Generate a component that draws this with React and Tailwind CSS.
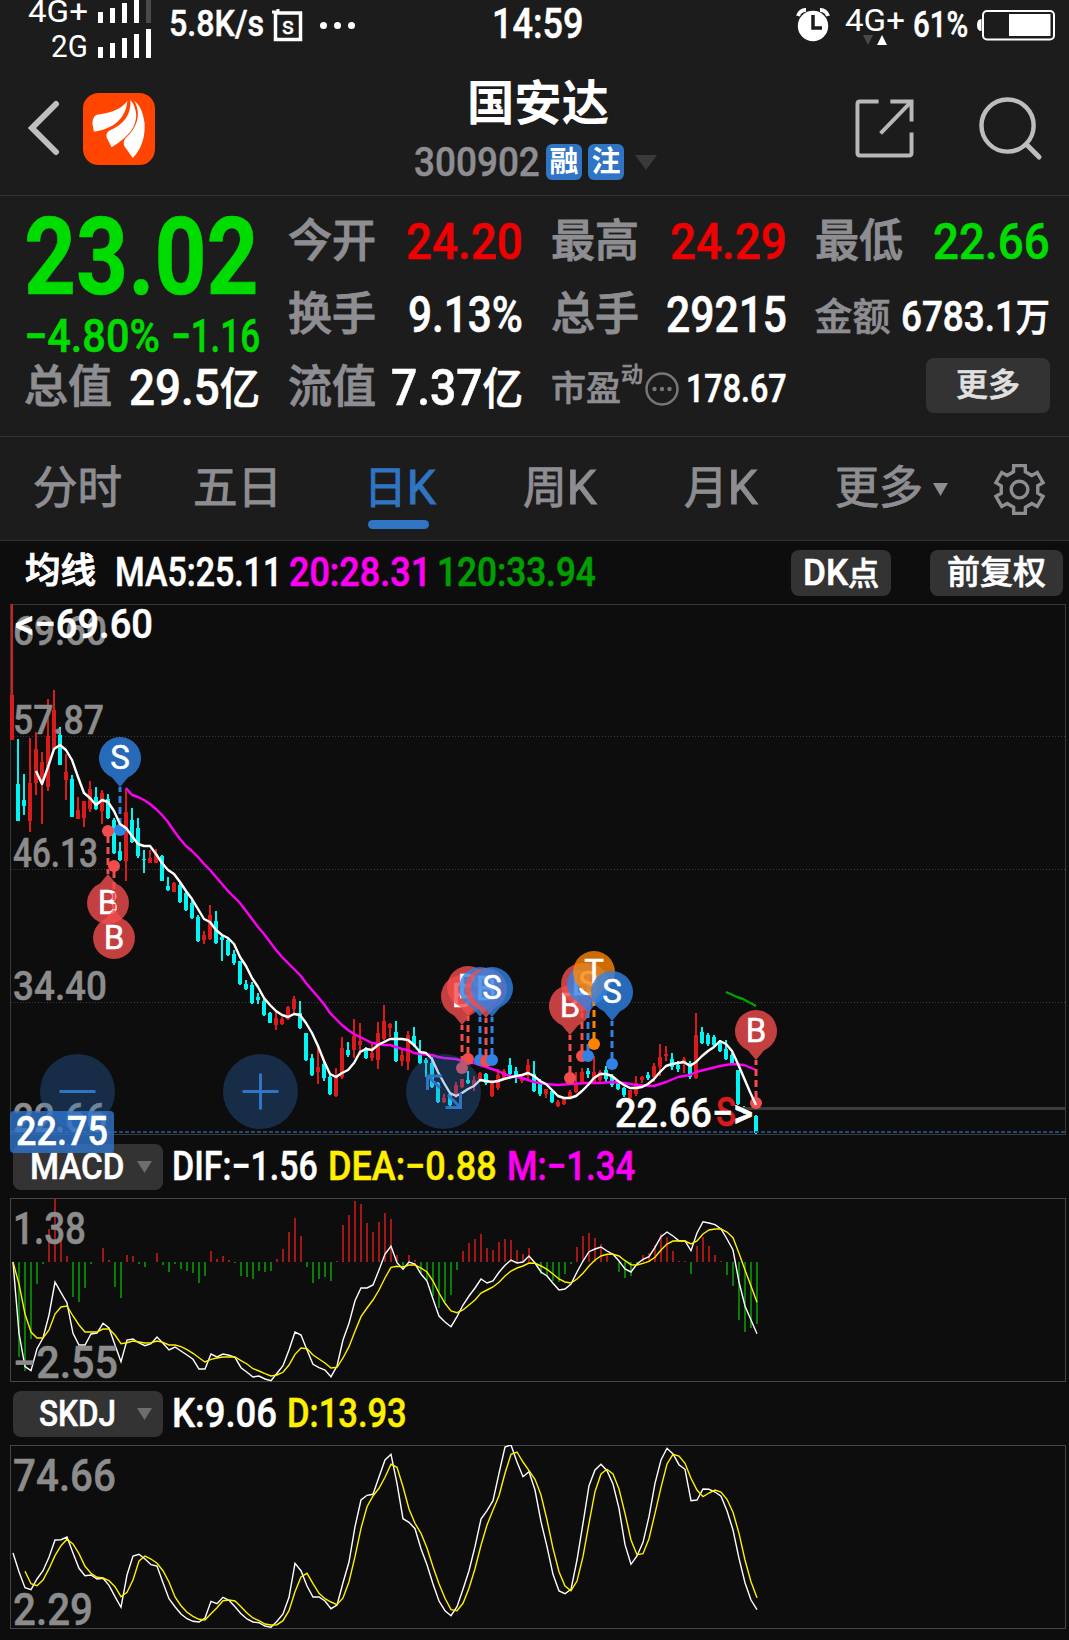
import React, { useLayoutEffect, useRef, useState } from 'react';
import clsx from 'clsx';

const UP = '#d91b1b';
const DOWN = '#00f5f5';

// [high, low, body top, body bottom, 1 = up / 0 = down], one entry per trading day
const candles = [
    [604, 740, 695, 740, 1], [739, 821, 784, 821, 0], [774, 815, 800, 806, 0], [738, 832, 783, 821, 1],
    [732, 795, 749, 783, 1], [752, 824, 762, 783, 1], [699, 791, 736, 787, 1], [690, 750, 710, 749, 1],
    [727, 765, 735, 765, 0], [754, 800, 772, 780, 1], [775, 817, 779, 817, 0], [797, 819, 810, 819, 1],
    [801, 827, 801, 818, 1], [781, 812, 789, 809, 1], [787, 810, 797, 809, 0], [790, 824, 793, 811, 1],
    [794, 819, 799, 818, 0], [818, 854, 820, 853, 0], [842, 861, 851, 860, 0], [789, 881, 812, 861, 1],
    [808, 843, 820, 842, 0], [818, 858, 828, 856, 0], [850, 873, 859, 860, 0], [850, 863, 858, 863, 1],
    [849, 863, 854, 863, 1], [855, 881, 856, 881, 0], [877, 891, 886, 890, 0], [882, 892, 883, 892, 1],
    [883, 903, 885, 902, 0], [892, 911, 893, 910, 0], [899, 919, 903, 918, 0], [915, 942, 917, 941, 0],
    [931, 944, 935, 940, 1], [905, 940, 915, 939, 1], [911, 944, 921, 943, 0], [935, 961, 937, 940, 0],
    [938, 956, 940, 955, 0], [950, 965, 954, 963, 0], [961, 985, 961, 984, 0], [980, 990, 984, 989, 0],
    [982, 1004, 985, 1003, 0], [993, 1004, 997, 1000, 0], [999, 1016, 1001, 1015, 0], [1012, 1023, 1013, 1023, 0],
    [1012, 1030, 1018, 1025, 1], [1017, 1025, 1019, 1024, 1], [1006, 1020, 1007, 1019, 1], [996, 1013, 999, 1009, 1],
    [1001, 1029, 1013, 1028, 0], [1033, 1061, 1033, 1060, 0], [1054, 1076, 1058, 1075, 0], [1046, 1084, 1067, 1072, 1],
    [1060, 1081, 1064, 1078, 0], [1075, 1095, 1077, 1094, 0], [1068, 1097, 1075, 1096, 1], [1037, 1079, 1048, 1077, 1],
    [1042, 1057, 1050, 1055, 0], [1019, 1058, 1036, 1050, 1], [1023, 1055, 1041, 1045, 1], [1047, 1059, 1048, 1058, 0],
    [1043, 1061, 1053, 1058, 1], [1022, 1069, 1033, 1060, 1], [1005, 1040, 1021, 1039, 1], [1023, 1037, 1024, 1028, 1],
    [1021, 1062, 1032, 1061, 0], [1049, 1066, 1055, 1061, 1], [1031, 1070, 1035, 1062, 1], [1027, 1047, 1036, 1045, 0],
    [1040, 1064, 1051, 1063, 0], [1058, 1077, 1060, 1063, 0], [1057, 1088, 1063, 1087, 0], [1082, 1103, 1083, 1102, 0],
    [1094, 1103, 1098, 1102, 1], [1093, 1106, 1094, 1105, 0], [1082, 1098, 1085, 1096, 1], [1079, 1088, 1079, 1087, 1],
    [1071, 1084, 1080, 1083, 0], [1076, 1091, 1080, 1085, 1], [1072, 1082, 1073, 1081, 1], [1073, 1085, 1074, 1083, 0],
    [1080, 1097, 1081, 1096, 1], [1069, 1090, 1075, 1088, 1], [1069, 1080, 1071, 1078, 1], [1058, 1076, 1065, 1074, 0],
    [1067, 1083, 1071, 1077, 0], [1076, 1083, 1078, 1081, 1], [1059, 1079, 1065, 1076, 1], [1061, 1092, 1074, 1091, 0],
    [1079, 1096, 1083, 1094, 0], [1089, 1098, 1089, 1094, 1], [1090, 1103, 1091, 1102, 0], [1100, 1107, 1102, 1106, 1],
    [1097, 1105, 1098, 1104, 1], [1090, 1099, 1092, 1097, 1], [1072, 1093, 1085, 1092, 1], [1068, 1083, 1072, 1082, 1],
    [1068, 1078, 1071, 1074, 0], [1056, 1083, 1072, 1082, 1], [1070, 1082, 1072, 1080, 1], [1066, 1082, 1070, 1079, 0],
    [1074, 1087, 1076, 1085, 0], [1080, 1090, 1083, 1089, 0], [1087, 1097, 1088, 1095, 0], [1090, 1099, 1090, 1098, 1],
    [1076, 1096, 1083, 1094, 1], [1076, 1083, 1077, 1080, 1], [1072, 1080, 1075, 1078, 0], [1063, 1082, 1066, 1077, 1],
    [1044, 1076, 1057, 1067, 1], [1046, 1061, 1054, 1056, 1], [1053, 1070, 1059, 1067, 0], [1061, 1072, 1065, 1069, 0],
    [1057, 1073, 1059, 1064, 1], [1061, 1079, 1063, 1077, 0], [1013, 1079, 1035, 1078, 1], [1027, 1044, 1032, 1043, 0],
    [1033, 1046, 1035, 1044, 0], [1035, 1046, 1037, 1045, 0], [1040, 1052, 1042, 1051, 0], [1040, 1060, 1049, 1059, 0],
    [1053, 1064, 1055, 1063, 0], [1070, 1105, 1070, 1104, 0], [1106, 1114, 1107, 1113, 0], [1112, 1118, 1113, 1117, 1],
    [1115, 1134, 1116, 1133, 0],
];

const ma5 = '36,771 42,784 48,767 54,749 60,745 66,750 72,760 78,777 84,793 90,798 96,805 102,800 108,802 114,811 120,824 126,828 132,836 138,844 144,846 150,846 156,854 162,863 168,870 174,874 180,882 186,891 192,899 198,909 204,919 210,922 216,930 222,935 228,938 234,944 240,957 246,966 252,978 258,987 264,998 270,1005 276,1011 282,1015 288,1017 294,1014 300,1015 306,1023 312,1033 318,1046 324,1061 330,1074 336,1077 342,1073 348,1070 354,1063 360,1052 366,1049 372,1050 378,1045 384,1042 390,1039 402,1039 408,1040 414,1045 420,1052 426,1053 432,1059 438,1072 444,1083 450,1093 456,1096 462,1093 468,1089 474,1086 480,1080 492,1082 498,1081 504,1079 516,1076 522,1075 528,1073 534,1076 540,1081 546,1084 552,1090 558,1096 564,1098 570,1098 576,1096 582,1091 588,1085 594,1078 600,1074 606,1074 612,1076 618,1081 624,1085 630,1088 636,1088 642,1087 648,1084 654,1079 660,1072 666,1066 672,1064 678,1063 684,1062 690,1066 696,1062 702,1056 708,1051 714,1047 720,1041 726,1044 732,1051 738,1064 744,1078 750,1092 756,1105';
const ma20 = '126,788 132,795 138,797 144,800 150,804 156,809 162,815 168,822 174,831 180,839 186,846 192,851 198,857 204,864 210,870 216,877 222,884 228,891 234,897 240,903 246,911 252,919 258,927 264,934 270,942 276,950 282,957 288,963 294,969 300,975 306,983 312,990 318,997 324,1004 330,1013 336,1019 342,1025 348,1030 354,1034 360,1037 366,1040 372,1043 378,1044 384,1045 390,1045 396,1047 402,1049 408,1050 414,1053 420,1054 432,1055 438,1057 444,1058 456,1059 462,1061 468,1062 474,1063 480,1065 486,1067 492,1069 498,1071 504,1074 510,1076 522,1078 534,1082 546,1084 558,1085 570,1084 588,1083 600,1083 612,1082 624,1083 636,1085 654,1086 666,1082 678,1077 690,1075 696,1072 708,1069 720,1066 732,1064 744,1065 756,1070';

const macdBars = [
    0, -95, -109, -77, -22, -2, 33, 64, 29, 6, -35, -40, -26, -2, 0, 14, 2, -25, -36, 7, 6, -2, -5, 0, 9, -3, -10, -2, -7, -9, -11, -21,
    -14, 11, 3, 6, 2, -1, -14, -15, -17, -9, -10, -9, 3, 13, 30, 44, 26, -5, -21, -17, -15, -19, 1, 37, 47, 61, 58, 39, 30, 40, 49, 43,
    7, -6, 7, 2, -12, -18, -34, -46, -40, -33, -8, 11, 19, 23, 28, 14, 12, 20, 23, 22, 12, 8, 14, -1, -12, -14, -19, -20, -12, -2, 15,
    26, 29, 24, 18, 7, 0, -10, -16, -14, -3, 7, 9, 17, 28, 25, 11, 1, 1, -12, 16, 25, 16, 7, 1, -13, -24, -58, -70, -66, -62,
];
const dif = [
    546, 760, 860, 872, 806, 774, 705, 606, 638, 669, 760, 795, 795, 762, 759, 730, 744, 795, 845, 780, 777, 789, 797, 791, 771, 790,
    810, 801, 813, 825, 838, 867, 867, 822, 831, 822, 826, 832, 863, 877, 891, 888, 897, 902, 880, 857, 810, 756, 765, 810, 853, 863,
    870, 890, 858, 780, 730, 662, 624, 624, 615, 570, 522, 499, 548, 568, 546, 552, 582, 603, 657, 708, 726, 740, 710, 675, 648, 624,
    597, 609, 603, 577, 556, 540, 549, 546, 528, 549, 576, 588, 610, 630, 627, 612, 576, 543, 515, 507, 501, 513, 523, 543, 567, 576,
    552, 538, 530, 502, 470, 456, 468, 482, 483, 512, 459, 425, 429, 434, 447, 477, 510, 606, 678, 720, 761,
];
const dea = [
    546, 612, 702, 756, 774, 774, 750, 702, 681, 678, 708, 735, 756, 756, 756, 747, 747, 765, 791, 788, 783, 786, 789, 788, 783, 787,
    795, 795, 800, 809, 820, 833, 846, 838, 834, 831, 831, 831, 842, 852, 866, 873, 881, 888, 885, 877, 855, 823, 804, 806, 825, 837,
    849, 864, 862, 834, 800, 754, 710, 684, 660, 630, 594, 562, 559, 561, 555, 555, 564, 576, 603, 639, 670, 693, 698, 690, 675, 660,
    639, 630, 621, 607, 588, 573, 564, 558, 549, 550, 558, 568, 582, 597, 606, 609, 597, 580, 558, 540, 528, 523, 523, 528, 542, 554,
    555, 550, 544, 532, 510, 492, 483, 482, 483, 492, 483, 462, 450, 447, 447, 456, 473, 520, 570, 618, 667,
];
const kLine = [
    519, 575, 623, 629, 597, 572, 532, 480, 479, 471, 519, 565, 587, 585, 597, 595, 616, 650, 682, 585, 528, 523, 537, 554, 558, 608,
    656, 680, 702, 716, 724, 726, 714, 664, 671, 652, 661, 680, 701, 717, 726, 728, 738, 742, 724, 702, 652, 550, 572, 618, 651, 651,
    663, 686, 675, 608, 546, 440, 360, 346, 343, 291, 240, 223, 310, 416, 427, 446, 506, 554, 612, 663, 692, 707, 680, 628, 572, 500,
    417, 392, 362, 280, 201, 195, 246, 290, 275, 330, 425, 500, 583, 633, 641, 628, 540, 430, 317, 270, 253, 272, 312, 385, 494, 553,
    528, 487, 410, 310, 240, 205, 222, 254, 268, 362, 360, 327, 328, 336, 349, 392, 450, 535, 608, 660, 689,
];
const dLine = [
    null, null, 574, 611, 617, 600, 566, 527, 497, 478, 492, 521, 559, 580, 592, 594, 602, 620, 650, 637, 600, 543, 528, 537, 550, 572,
    606, 651, 677, 697, 709, 718, 720, 701, 683, 662, 660, 663, 680, 699, 714, 722, 732, 735, 734, 722, 692, 635, 591, 580, 611, 640,
    656, 666, 674, 654, 605, 530, 445, 380, 348, 325, 292, 253, 262, 320, 387, 430, 460, 504, 560, 611, 655, 689, 692, 670, 625, 566,
    496, 435, 390, 347, 280, 223, 216, 246, 272, 298, 345, 420, 505, 575, 618, 632, 603, 530, 430, 335, 282, 268, 282, 327, 400, 480,
    524, 521, 476, 400, 322, 252, 223, 228, 250, 295, 330, 350, 339, 330, 336, 358, 397, 460, 540, 605, 653,
];

const toPoints = (series, top) =>
    series.map((v, i) => (v === null ? '' : `${13 + i * 6},${(v / 3 - top).toFixed(1)}`)).join(' ').trim();

const pins = [
    { x: 108, y: 903, type: 'B', up: true },
    { x: 114, y: 938, type: 'B', up: true },
    { x: 120, y: 758, type: 'S' },
    { x: 462, y: 996, type: 'B' },
    { x: 468, y: 987, type: 'B' },
    { x: 480, y: 988, type: 'S' },
    { x: 486, y: 989, type: 'B' },
    { x: 492, y: 988, type: 'S' },
    { x: 570, y: 1006, type: 'B' },
    { x: 582, y: 984, type: 'B' },
    { x: 588, y: 984, type: 'S' },
    { x: 594, y: 972, type: 'T' },
    { x: 612, y: 992, type: 'S' },
    { x: 756, y: 1031, type: 'B' },
];
const pinColors = { B: '#f24c4c', S: '#3082e6', T: '#ff8200' };

// squeezes a run of text to a fixed width
const Fit = ({ w, className, children }) => {
    const ref = useRef(null);
    const [scale, setScale] = useState(1);

    useLayoutEffect(() => {
        setScale(w / ref.current.offsetWidth);
    }, [w]);

    return (
        <span className={clsx('block shrink-0 leading-none', className)} style={{ width: w }}>
            <span ref={ref} className="block w-max origin-left whitespace-nowrap" style={{ transform: `scaleX(${scale})` }}>
                {children}
            </span>
        </span>
    );
};

const Pin = ({ x, y, type, up }) => {
    const color = pinColors[type];
    const dir = up ? -1 : 1;
    const dot = y + 72 * dir;
    return (
        <g>
            <line x1={x} y1={y + 29 * dir} x2={x} y2={dot} stroke={color} strokeWidth="3" strokeDasharray="7 4" strokeDashoffset="2" />
            <circle cx={x} cy={dot} r="6" fill={color} />
            <path
                d={`M${x} ${y + 29 * dir}L${x - 8} ${y + 19.4 * dir}A21 21 0 1 ${up ? 0 : 1} ${x + 8} ${y + 19.4 * dir}Z`}
                fill={color}
                opacity="0.8"
            />
            <text x={x} y={y + 11} fill="#fff" stroke="#fff" strokeWidth="0.5" textAnchor="middle" className="text-[33px]">{type}</text>
        </g>
    );
};

const ChartText = ({ x, y, w, fill = '#8c8c8c', className = 'text-[40px]', children }) => (
    <text
        x={x}
        y={y}
        textLength={w}
        lengthAdjust="spacingAndGlyphs"
        fill={fill}
        stroke={fill}
        strokeWidth="0.5"
        className={clsx('font-medium', className)}
    >
        {children}
    </text>
);

const RoundButton = ({ cx, children }) => (
    <g>
        <circle cx={cx} cy="1091.5" r="37.5" fill="#3074cc" opacity="0.3" />
        <g stroke="#2f74c5" strokeWidth="3" fill="none">{children}</g>
    </g>
);

const SignalBars = ({ heights, dimLast }) => (
    <div className="flex items-end gap-[7px]">
        {heights.map((h, i) => (
            <div key={i} className={clsx('w-[5px]', dimLast && i === 4 ? 'bg-[#4a4a4a]' : 'bg-white')} style={{ height: h }} />
        ))}
    </div>
);

const StatusBar = () => (
    <div className="flex h-[65px] items-start text-white">
        <div className="w-[151px] shrink-0">
            <div className="flex h-[23px] items-end justify-end gap-[10px]">
                <Fit w={60} className="-mb-[4px] text-[32px]">4G+</Fit>
                <SignalBars heights={[11, 15, 20, 23, 23]} dimLast />
            </div>
            <div className="flex h-[35px] items-end justify-end gap-[10px]">
                <Fit w={37} className="-mb-[4px] text-[32px]">2G</Fit>
                <SignalBars heights={[11, 15, 20, 24, 29]} />
            </div>
        </div>
        <Fit w={95} className="mt-[5px] ml-[18px] text-[37px] font-medium [-webkit-text-stroke:0.5px]">5.8K/s</Fit>
        <svg className="mt-[9px] ml-2 h-[33px] w-[31px]" viewBox="0 0 31 33">
            <rect x="3.5" y="4" width="25" height="26.5" fill="none" stroke="#fff" strokeWidth="3.5" />
            <path d="M0 3h6V0" stroke="#fff" strokeWidth="3" fill="none" />
            <text x="16" y="25" fill="#fff" stroke="#fff" strokeWidth="0.5" textAnchor="middle" className="text-[24px]">s</text>
        </svg>
        <div className="mt-[22px] ml-[17px] flex gap-[7px]">
            <div className="size-[7px] rounded-full bg-white" />
            <div className="size-[7px] rounded-full bg-white" />
            <div className="size-[7px] rounded-full bg-white" />
        </div>
        <Fit w={92} className="mt-[3px] ml-[137px] text-[42px] font-medium [-webkit-text-stroke:0.5px]">14:59</Fit>
        <svg className="mt-2 ml-[211px] h-[34px] w-9" viewBox="0 0 36 34">
            <path d="M3 8a8 8 0 0 1 8-6M33 8a8 8 0 0 0-8-6" stroke="#fff" strokeWidth="4" fill="none" />
            <circle cx="18" cy="18" r="15.2" fill="#fff" />
            <path d="M18 7v13h9" stroke="#1c1c1c" strokeWidth="3.5" fill="none" />
        </svg>
        <div className="ml-[14px] pt-1">
            <Fit w={60} className="text-[32px]">4G+</Fit>
            <svg className="-mt-[1px] ml-[18px] h-[10px] w-6" viewBox="0 0 24 10">
                <path d="M0 0h10l-5 10z" fill="#4a4a4a" />
                <path d="M14 10h10L19 0z" fill="#fff" />
            </svg>
        </div>
        <Fit w={55} className="mt-[6px] ml-[8px] text-[37px] font-medium [-webkit-text-stroke:0.5px]">61%</Fit>
        <svg className="mt-[10px] ml-[9px] h-[31px] w-[78px]" viewBox="0 0 78 31">
            <path d="M4.500 9v12q-4.500 0-4.500-6t4.500-6z" fill="#fff" />
            <rect x="6" y="1" width="71" height="28.500" rx="4" fill="none" stroke="#fff" strokeWidth="2" />
            <rect x="32" y="4" width="41.500" height="22" fill="#fff" />
        </svg>
    </div>
);

const Header = () => (
    <div className="flex h-[131px] items-start border-b border-[#333]">
        <svg className="mt-[35px] ml-[27px] h-[56px] w-[33px]" viewBox="0 0 33 56">
            <path d="M29 4L5 28l24 24" fill="none" stroke="#bfbfbf" strokeWidth="6" strokeLinecap="round" />
        </svg>
        <svg className="mt-[28px] ml-[23px] size-[72px]" viewBox="0 0 73 73">
            <rect width="73" height="73" rx="16" fill="#ff4500" />
            <g fill="#fff">
                <path d="M45 8C38 17 28 20 14 22Q9.500 24 9.500 31L11 39C28 37 43 28 45 8Z" />
                <path d="M48 7C49 22 42 31 27 38Q23 40 24 45L29 55C47 44 54 34 54 22Q53 12 48 7Z" />
                <path d="M52 8C60 22 54 36 43 46Q40 50 42 54L50.500 66C60 56 63 44 62.500 31C61 20 58 12 52 8Z" />
            </g>
        </svg>
        <div className="ml-[259px] w-[244px]">
            <Fit w={142} className="mt-[15px] ml-[53px] text-[48px] font-bold text-white">国安达</Fit>
            <div className="mt-[13px] flex h-[42px] items-center">
                <Fit w={126} className="text-[41px] font-medium text-[#8e8d92] [-webkit-text-stroke:0.5px]">300902</Fit>
                <div className="ml-[6px] flex gap-[6px] text-[29px] font-bold text-white">
                    <div className="flex size-9 items-center justify-center rounded-md bg-[#3074c4] leading-none">融</div>
                    <div className="flex size-9 items-center justify-center rounded-md bg-[#3074c4] leading-none">注</div>
                </div>
                <svg className="ml-[11px] h-[15px] w-[22px]" viewBox="0 0 22 15">
                    <path d="M0 0h22L11 15z" fill="#3a3a3a" />
                </svg>
            </div>
        </div>
        <svg className="mt-[34px] ml-[197px] size-[59px]" viewBox="0 0 60 60" fill="none" stroke="#b8b8b8" strokeWidth="4">
            <path d="M24 2.500H5q-2.500 0-2.500 2.500v50q0 2.500 2.500 2.500h50q2.500 0 2.500-2.500V34M36 2.500h21.500V23M57 3L26 35" />
        </svg>
        <svg className="mt-[31px] ml-[65px] size-[65px]" viewBox="0 0 66 66" fill="none" stroke="#bdbdbd" strokeWidth="4.500">
            <circle cx="29" cy="30" r="26.500" />
            <path d="M48 49l13 13" strokeWidth="5" strokeLinecap="round" />
        </svg>
    </div>
);

const Row = ({ label, children }) => (
    <div className="flex items-center justify-between">
        <Fit w={88} className="text-[45px] text-[#8e8d92] [-webkit-text-stroke:1px]">{label}</Fit>
        {children}
    </div>
);

const Quote = () => (
    <div className="grid h-[241px] grid-cols-4 grid-rows-[73px_73px_73px] gap-x-[28px] border-b border-[#333] pt-[9px] pr-[19px] pl-[24px] text-[50px] font-medium text-white [-webkit-text-stroke:0.6px]">
        <div className="row-span-2 text-[#00dc00]">
            <Fit w={235} className="mt-[-1px] text-[107px] font-bold">23.02</Fit>
            <div className="mt-[2px] flex justify-between text-[46px]">
                <Fit w={136}>−4.80%</Fit>
                <Fit w={89}>−1.16</Fit>
            </div>
        </div>
        <Row label="今开"><Fit w={117} className="text-[#f00000]">24.20</Fit></Row>
        <Row label="最高"><Fit w={117} className="text-[#f00000]">24.29</Fit></Row>
        <Row label="最低"><Fit w={117} className="text-[#00dc00]">22.66</Fit></Row>
        <Row label="换手"><Fit w={115}>9.13%</Fit></Row>
        <Row label="总手"><Fit w={121}>29215</Fit></Row>
        <div className="flex items-center justify-between pt-[5px]">
            <Fit w={76} className="text-[38px] text-[#8e8d92]">金额</Fit>
            <Fit w={149} className="text-[42px]">6783.1<span className="text-[39px] leading-[0]">万</span></Fit>
        </div>
        <Row label="总值"><Fit w={131}>29.5<span className="text-[44px] leading-[0]">亿</span></Fit></Row>
        <Row label="流值"><Fit w={132}>7.37<span className="text-[44px] leading-[0]">亿</span></Fit></Row>
        <div className="flex items-center pt-[3px] text-[#8e8d92]">
            <Fit w={70} className="text-[35px]">市盈</Fit>
            <span className="mb-7 text-[22px] leading-none">动</span>
            <svg className="ml-[2px] size-[34px]" viewBox="0 0 34 34" fill="#77777b">
                <circle cx="17" cy="17" r="15.500" fill="none" stroke="#77777b" strokeWidth="2.500" />
                <circle cx="9.500" cy="17" r="2.200" />
                <circle cx="17" cy="17" r="2.200" />
                <circle cx="24.500" cy="17" r="2.200" />
            </svg>
            <Fit w={101} className="ml-auto text-[39px] text-white">178.67</Fit>
        </div>
        <button className="mt-[7px] flex h-[55px] w-[124px] items-center justify-center justify-self-end rounded-lg bg-[#333] pb-[2px] text-[32px] leading-none text-[#e0e0e0]">
            更多
        </button>
    </div>
);

const gearPath = () => {
    const pts = [];
    for (let k = 0; k < 6; k++) {
        [[-0.24, 25], [0.24, 25], [0.32, 19], [0.72, 19]].forEach(([a, r]) => {
            const t = (k * Math.PI) / 3 + a - Math.PI / 2;
            pts.push(`${(27 + r * Math.cos(t)).toFixed(1)},${(27 + r * Math.sin(t)).toFixed(1)}`);
        });
    }
    return pts.join(' ');
};

const Tabs = () => (
    <div className="flex h-[104px] items-start border-b border-[#333] pt-[29px] text-[45px] text-[#8e8d92] [-webkit-text-stroke:1px]">
        <Fit w={89} className="ml-[33px]">分时</Fit>
        <Fit w={89} className="ml-[71px]">五日</Fit>
        <div className="ml-[82px] text-[#3074c4]">
            <Fit w={72}>日<span className="text-[49px] leading-[0]">K</span></Fit>
            <div className="mt-[9px] ml-1 h-[9px] w-[61px] rounded-full bg-[#3074c4]" />
        </div>
        <Fit w={74} className="ml-[87px]">周<span className="text-[49px] leading-[0]">K</span></Fit>
        <Fit w={74} className="ml-[87px]">月<span className="text-[49px] leading-[0]">K</span></Fit>
        <Fit w={88} className="ml-[77px]">更多</Fit>
        <svg className="mt-[17px] ml-[10px] h-[13px] w-[15px]" viewBox="0 0 15 13">
            <path d="M0 0h15L7.500 13z" fill="#8e8d92" />
        </svg>
        <svg className="-mt-[3px] ml-[45px] size-[53px]" viewBox="0 0 54 54" fill="none" stroke="#8e8d92">
            <polygon points={gearPath()} strokeWidth="3.500" />
            <circle cx="27" cy="27" r="8.500" strokeWidth="3.500" />
        </svg>
    </div>
);

const IndicatorButton = ({ w, children }) => (
    <button className="flex h-[46px] w-[150px] shrink-0 items-center justify-between rounded-lg bg-[#333] pr-[11px] pl-[16px] text-[36px] text-white">
        <span className="flex w-[96px] justify-center"><Fit w={w}>{children}</Fit></span>
        <svg className="h-3 w-[15px]" viewBox="0 0 15 12">
            <path d="M0 0h15L7.500 12z" fill="#6e6e6e" />
        </svg>
    </button>
);

const MainChart = () => (
    <svg className="relative z-10 block h-[531px] w-full overflow-visible" viewBox="0 604 1069 531">
        <rect x="10.500" y="604.500" width="1055" height="530" fill="none" stroke="#3a3a3a" />
        <g stroke="#3a3a3a" strokeDasharray="1 2">
            <path d="M11 736.500h1054M11 869.500h1054M11 1002.500h1054" />
        </g>
        {candles.map(([high, low, top, bottom, up], i) => (
            <g key={i} fill={up ? UP : DOWN}>
                <rect x={11 + i * 6} y={high} width="2" height={low - high} />
                <rect x={10 + i * 6} y={top} width="4" height={bottom - top} />
            </g>
        ))}
        <path d="M742 1108.500h323" stroke="#3c3c3c" strokeWidth="3" />
        <path d="M11 1132h1054" stroke="#24497c" strokeWidth="2" strokeDasharray="4 2" />
        <ChartText x={13} y={645} w={94}>69.60</ChartText>
        <ChartText x={13} y={734} w={91}>57.87</ChartText>
        <ChartText x={13} y={867} w={85}>46.13</ChartText>
        <ChartText x={13} y={1000} w={94}>34.40</ChartText>
        <ChartText x={13} y={1132} w={94}>22.66</ChartText>
        <g fill="none" strokeWidth="2.400" strokeLinejoin="round">
            <polyline points={ma20} stroke="#ff00f5" />
            <polyline points="726,992 737,997 743,999 756,1006" stroke="#00a000" />
        </g>
        {pins.map((p, i) => <Pin key={i} {...p} />)}
        <polyline points={ma5} stroke="#fff" strokeWidth="2.400" fill="none" strokeLinejoin="round" />
        <ChartText x={15} y={638} w={138} fill="#fff">&lt;−69.60</ChartText>
        <ChartText x={716} y={1126} w={20} fill={UP}>S</ChartText>
        <ChartText x={615} y={1127} w={138} fill="#fff">22.66−&gt;</ChartText>
        <RoundButton cx={77.5}><path d="M59.500 1091.500h36" /></RoundButton>
        <RoundButton cx={260.5}><path d="M242.500 1091.500h36M260.500 1073.500v36" /></RoundButton>
        <RoundButton cx={443.5}>
            <path d="M427.500 1090v-14h14.500M428 1076l12 12M445.500 1107.500h15v-14.500M460 1107l-12-12" />
        </RoundButton>
        <rect x="10" y="1111" width="104" height="42" rx="4" fill="#3074cc" opacity="0.8" />
        <ChartText x={16} y={1145} w={92} fill="#fff">22.75</ChartText>
    </svg>
);

const SubChart = ({ children, labels }) => (
    <svg className="block h-[184px] w-full" viewBox="0 0 1069 184">
        <rect x="10.500" y="0.500" width="1055" height="183" fill="none" stroke="#454545" />
        {children}
        {labels}
    </svg>
);

export default function App() {
    return (
        <div className="h-[1640px] w-[1069px] overflow-hidden bg-[#0d0d0d] font-['Roboto','Noto_Sans_CJK_SC',sans-serif]">
            <div className="bg-[#1c1c1c]">
                <StatusBar />
                <Header />
                <Quote />
                <Tabs />
            </div>

            <div className="flex h-[63px] items-center pl-[25px] text-[40px] font-medium text-white [-webkit-text-stroke:0.6px]">
                <Fit w={71} className="pb-[2px] text-[35px] [-webkit-text-stroke:1px]">均线</Fit>
                <Fit w={167} className="ml-[19px]">MA5:25.11</Fit>
                <Fit w={142} className="ml-[7px] text-[#ff00f5]">20:28.31</Fit>
                <Fit w={159} className="ml-[6px] text-[#00a000]">120:33.94</Fit>
                <button className="ml-[195px] flex h-[46px] w-[100px] items-center justify-center rounded-lg bg-[#333] text-[36px]">
                    <Fit w={76}>DK<span className="text-[32px] leading-[0]">点</span></Fit>
                </button>
                <button className="ml-[39px] flex h-[46px] w-[133px] items-center justify-center rounded-lg bg-[#333] text-[33px]">
                    <Fit w={99}>前复权</Fit>
                </button>
            </div>
            <MainChart />

            <div className="flex h-[63px] items-center pl-[13px] text-[40px] font-medium text-white [-webkit-text-stroke:0.5px]">
                <IndicatorButton w={94}>MACD</IndicatorButton>
                <Fit w={146} className="ml-[9px]">DIF:−1.56</Fit>
                <Fit w={169} className="ml-[10px] text-[#fff000]">DEA:−0.88</Fit>
                <Fit w={128} className="ml-[10px] text-[#ff00f5]">M:−1.34</Fit>
            </div>
            <SubChart
                labels={
                    <>
                        <ChartText x={13} y={46} w={73} className="text-[44px]">1.38</ChartText>
                        <ChartText x={13} y={180} w={105} className="text-[44px]">−2.55</ChartText>
                    </>
                }
            >
                {macdBars.map((v, i) => (
                    <rect key={i} x={12 + i * 6} y={v > 0 ? 64 - v : 64} width="2" height={Math.abs(v)} fill={v > 0 ? '#a31717' : '#087d08'} />
                ))}
                <g fill="none" strokeWidth="1.400">
                    <polyline points={toPoints(dif, 118)} stroke="#fff" />
                    <polyline points={toPoints(dea, 118)} stroke="#fff000" />
                </g>
            </SubChart>

            <div className="flex h-[63px] items-center pl-[13px] text-[40px] font-medium text-white [-webkit-text-stroke:0.5px]">
                <IndicatorButton w={77}>SKDJ</IndicatorButton>
                <Fit w={105} className="ml-[9px]">K:9.06</Fit>
                <Fit w={120} className="ml-[10px] text-[#fff000]">D:13.93</Fit>
            </div>
            <SubChart
                labels={
                    <>
                        <ChartText x={13} y={46} w={103} className="text-[44px]">74.66</ChartText>
                        <ChartText x={13} y={180} w={80} className="text-[44px]">2.29</ChartText>
                    </>
                }
            >
                <g fill="none" strokeWidth="1.400">
                    <polyline points={toPoints(kLine, 65)} stroke="#fff" />
                    <polyline points={toPoints(dLine, 65)} stroke="#fff000" />
                </g>
            </SubChart>
        </div>
    );
}
